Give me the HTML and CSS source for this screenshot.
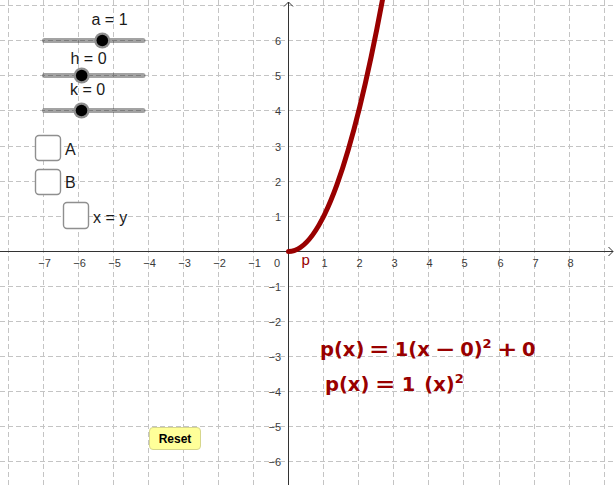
FILE: index.html
```html
<!DOCTYPE html>
<html lang="en">
<head>
<meta charset="utf-8">
<title>Graph of p(x)</title>
<link rel="stylesheet" href="styles.css">
</head>
<body>
<div class="applet">
  <svg class="graph" width="616" height="485" viewBox="0 0 616 485" xmlns="http://www.w3.org/2000/svg">
    <path class="grid" d="M8.5 0V485M43.5 0V485M78.5 0V485M113.5 0V485M148.5 0V485M183.5 0V485M218.5 0V485M253.5 0V485M323.5 0V485M358.5 0V485M393.5 0V485M428.5 0V485M463.5 0V485M499.5 0V485M534.5 0V485M569.5 0V485M604.5 0V485"/>
    <path class="grid" d="M0 5.5H616M0 40.5H616M0 75.5H616M0 110.5H616M0 146.5H616M0 181.5H616M0 216.5H616M0 286.5H616M0 321.5H616M0 356.5H616M0 391.5H616M0 426.5H616M0 461.5H616"/>

    <path class="axis" d="M0 251.5H613M608.5 247L613 251.5L608.5 256M288.5 485V2M284 6.5L288.5 2L293 6.5"/>

    <g class="num xnum">
      <text x="44.5" y="267">−7</text>
      <text x="79.5" y="267">−6</text>
      <text x="114.5" y="267">−5</text>
      <text x="149.5" y="267">−4</text>
      <text x="184.5" y="267">−3</text>
      <text x="219.5" y="267">−2</text>
      <text x="254.5" y="267">−1</text>
      <text x="324.5" y="267">1</text>
      <text x="359.5" y="267">2</text>
      <text x="394.5" y="267">3</text>
      <text x="429.5" y="267">4</text>
      <text x="464.5" y="267">5</text>
      <text x="500.5" y="267">6</text>
      <text x="535.5" y="267">7</text>
      <text x="570.5" y="267">8</text>
    </g>
    <g class="num ynum">
      <text x="280" y="267">0</text>
      <text x="281" y="45">6</text>
      <text x="281" y="80">5</text>
      <text x="281" y="115">4</text>
      <text x="281" y="151">3</text>
      <text x="281" y="186">2</text>
      <text x="281" y="221">1</text>
      <text x="281" y="291">−1</text>
      <text x="281" y="326">−2</text>
      <text x="281" y="361">−3</text>
      <text x="281" y="396">−4</text>
      <text x="281" y="431">−5</text>
      <text x="281" y="466">−6</text>
    </g>

    <path class="curve" d="M288.5 251.5Q336.8 251.5 385 -13.9"/>
    <text class="curve-label" x="301.5" y="265">p</text>

    <g class="slider">
      <line class="track" x1="44.5" y1="40.5" x2="143" y2="40.5"/>
      <circle class="halo" cx="102.3" cy="40.5" r="8"/>
      <circle class="knob" cx="102.3" cy="40.5" r="5.8"/>
      <text class="ctl-text" x="91.5" y="25">a = 1</text>
    </g>
    <g class="slider">
      <line class="track" x1="44.5" y1="75.5" x2="143" y2="75.5"/>
      <circle class="halo" cx="81.7" cy="75.5" r="8"/>
      <circle class="knob" cx="81.7" cy="75.5" r="5.8"/>
      <text class="ctl-text" x="70.5" y="63.5">h = 0</text>
    </g>
    <g class="slider">
      <line class="track" x1="44.5" y1="110.5" x2="143" y2="110.5"/>
      <circle class="halo" cx="81.5" cy="110.5" r="8"/>
      <circle class="knob" cx="81.5" cy="110.5" r="5.8"/>
      <text class="ctl-text" x="70" y="95">k = 0</text>
    </g>

    <g class="checkbox">
      <rect class="box" x="35.5" y="135.5" width="25" height="25" rx="3.5"/>
      <text class="ctl-text" x="65" y="154.5">A</text>
    </g>
    <g class="checkbox">
      <rect class="box" x="35.5" y="169.5" width="25" height="25" rx="3.5"/>
      <text class="ctl-text" x="65" y="188">B</text>
    </g>
    <g class="checkbox">
      <rect class="box" x="63.5" y="202.5" width="25" height="26" rx="3.5"/>
      <text class="ctl-text" x="93" y="222.5">x = y</text>
    </g>
  </svg>

  <div class="formula f1">p(x)<span class="op">=</span>1(x<span class="op">−</span>0)<span class="sup">2</span><span class="op">+</span>0</div>
  <div class="formula f2">p(x)<span class="op">=</span>1<span class="gap"></span>(x)<span class="sup">2</span></div>

  <button class="reset" type="button">Reset</button>
</div>
</body>
</html>
```

FILE: styles.css
```css
body {
  margin: 0;
  background: #ffffff;
}

.applet {
  position: relative;
  width: 616px;
  height: 485px;
  overflow: hidden;
  background: #ffffff;
  font-family: "Liberation Sans", Arial, sans-serif;
}

.graph {
  display: block;
}

.grid {
  fill: none;
  stroke: #c4c4c4;
  stroke-width: 1;
  stroke-dasharray: 5 3;
}

.axis {
  fill: none;
  stroke: #333333;
  stroke-width: 1;
}

.num {
  font-family: "Liberation Sans", Arial, sans-serif;
  font-size: 11px;
  fill: #3a3a3a;
}

.xnum {
  text-anchor: middle;
}

.ynum {
  text-anchor: end;
}

.curve {
  fill: none;
  stroke: #990000;
  stroke-width: 5;
  stroke-linecap: round;
}

.curve-label {
  font-family: "Liberation Sans", Arial, sans-serif;
  font-size: 15px;
  fill: #990000;
}

.track {
  stroke: #000000;
  stroke-opacity: 0.36;
  stroke-width: 5;
  stroke-linecap: round;
}

.halo {
  fill: #8e8e8e;
}

.knob {
  fill: #000000;
}

.ctl-text {
  font-family: "Liberation Sans", Arial, sans-serif;
  font-size: 16px;
  fill: #1a1a1a;
}

.box {
  fill: #ffffff;
  stroke: #8f8f8f;
  stroke-width: 1.4;
}

.formula {
  position: absolute;
  font-family: "DejaVu Sans", sans-serif;
  font-weight: bold;
  font-size: 19.5px;
  line-height: 24px;
  color: #990000;
  white-space: nowrap;
}

.f1 {
  left: 320px;
  top: 338px;
}

.f2 {
  left: 325px;
  top: 373px;
}

.op {
  display: inline-block;
  margin: 0 7px;
  transform: scaleX(1.25);
}

.f2 .op {
  margin: 0 8px;
}

.gap {
  display: inline-block;
  width: 9px;
}

.sup {
  font-size: 13px;
  line-height: 0;
  vertical-align: 8px;
}

.reset {
  position: absolute;
  left: 149px;
  top: 427px;
  width: 52px;
  height: 23px;
  margin: 0;
  padding: 0;
  background: #ffff99;
  border: 1px solid #d6d68c;
  border-radius: 4px;
  font-family: "Liberation Sans", Arial, sans-serif;
  font-weight: bold;
  font-size: 12px;
  color: #000000;
  cursor: pointer;
}
```
